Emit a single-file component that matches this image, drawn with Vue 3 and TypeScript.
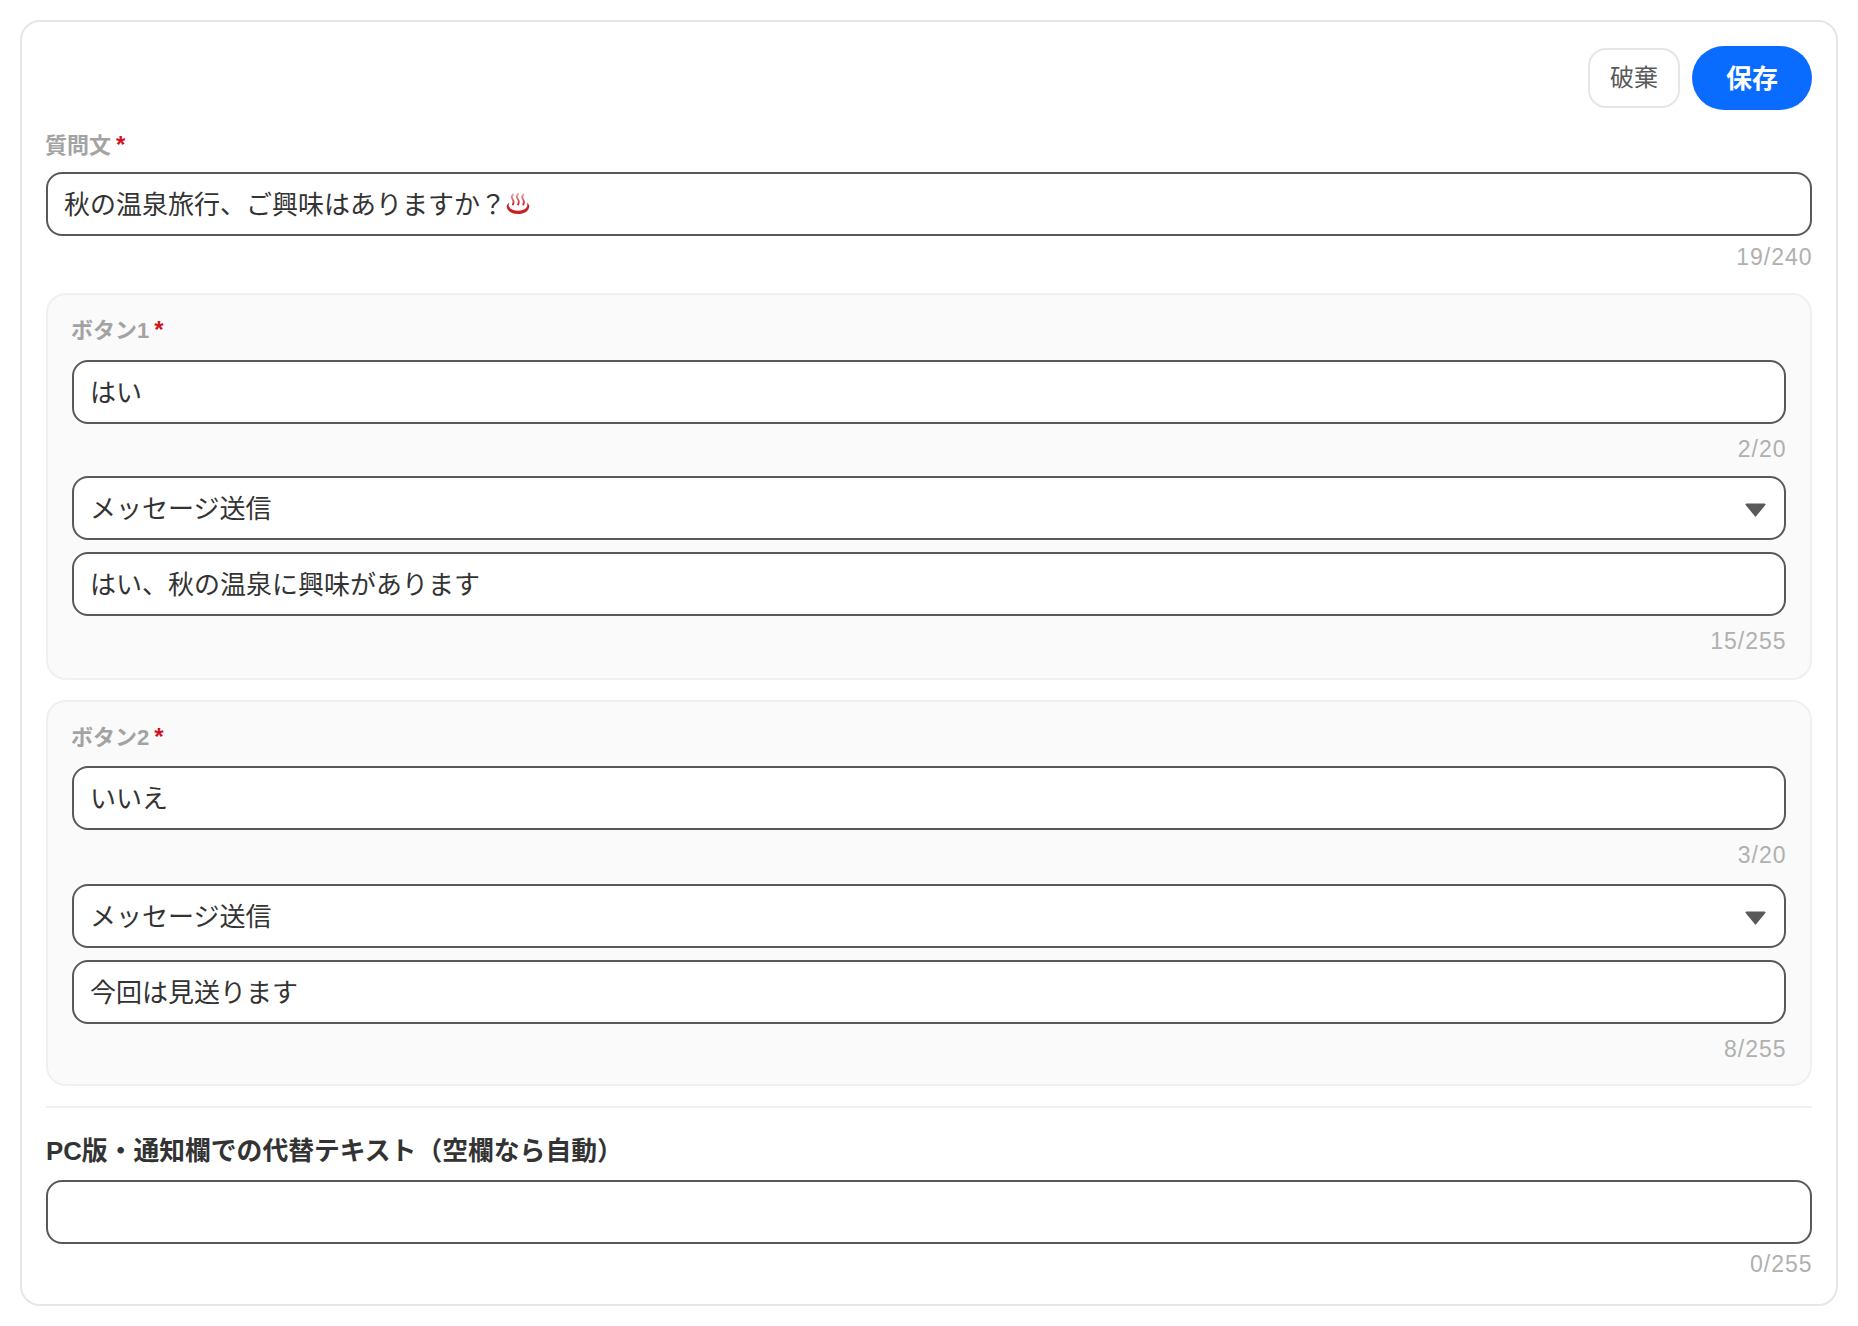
<script setup lang="ts">
interface Block {
  label: string
  text: string
  textCount: string
  action: string
  message: string
  messageCount: string
}

const blocks: Block[] = [
  { label: 'ボタン1', text: 'はい', textCount: '2/20', action: 'メッセージ送信', message: 'はい、秋の温泉に興味があります', messageCount: '15/255' },
  { label: 'ボタン2', text: 'いいえ', textCount: '3/20', action: 'メッセージ送信', message: '今回は見送ります', messageCount: '8/255' },
]
</script>

<template>
  <div class="page">
    <form class="card" @submit.prevent>
      <div class="actions">
        <button type="button" class="discard">破棄</button>
        <button type="submit" class="save">保存</button>
      </div>

      <div class="label top-label">質問文<span class="req">*</span></div>
      <div class="field">
        <span>秋の温泉旅行、ご興味はありますか？</span>
        <svg class="onsen" viewBox="0 0 24 22" width="24" height="22" aria-hidden="true">
          <defs>
            <linearGradient id="steam" x1="0" y1="0" x2="0" y2="1">
              <stop offset="0" stop-color="#e3a9a9" />
              <stop offset="1" stop-color="#cc1f24" />
            </linearGradient>
          </defs>
          <g fill="none" stroke="url(#steam)" stroke-width="1.8" stroke-linecap="round">
            <path d="M7 1.5c-2 2 -1.5 3.5 -.3 5s1.2 3 .2 5" />
            <path d="M12.2 1c-2 2 -1.5 3.7 -.3 5.2s1.2 3.2 .2 5.3" />
            <path d="M17.4 1.5c-2 2 -1.5 3.5 -.3 5s1.2 3 .2 5" />
          </g>
          <path d="M3.4 9.5C1.2 11 .6 12.600 .8 14c.6 4.400 5.600 7 11.200 7s10.600-2.600 11.200-7c.2-1.400-.4-3-2.600-4.500 1 1.600 1 3 .2 4.400-1.500 2.500-5 3.800-8.800 3.800s-7.300-1.300-8.800-3.800c-.8-1.400-.8-2.800 .2-4.400z" fill="#cc1f24" />
        </svg>
      </div>
      <div class="count count-top">19/240</div>

      <section v-for="b in blocks" :key="b.label" class="panel">
        <div class="label panel-label">{{ b.label }}<span class="req">*</span></div>
        <div class="field"><span>{{ b.text }}</span></div>
        <div class="count count-panel text-count">{{ b.textCount }}</div>
        <div class="field select">
          <span>{{ b.action }}</span>
          <svg class="caret" viewBox="0 0 21 14" width="21" height="14" aria-hidden="true">
            <path d="M1.500 .5h18a1 1 0 0 1 .8 1.600l-9 11a1 1 0 0 1-1.600 0l-9-11A1 1 0 0 1 1.500 .5z" fill="#595959" />
          </svg>
        </div>
        <div class="field message"><span>{{ b.message }}</span></div>
        <div class="count count-panel">{{ b.messageCount }}</div>
      </section>

      <hr class="rule" />

      <div class="label alt-label">PC版・通知欄での代替テキスト（空欄なら自動）</div>
      <div class="field"></div>
      <div class="count count-alt">0/255</div>
    </form>
  </div>
</template>

<style>
html, body { margin: 0; background: #fff; }
</style>

<style scoped>
.page {
  padding: 20px;
  font-family: "Liberation Sans", "Noto Sans CJK JP", sans-serif;
  color: #333;
}
.card {
  box-sizing: border-box;
  width: 1818px;
  height: 1286px;
  border: 2px solid #e6e6e6;
  border-radius: 20px;
  padding: 24px;
  background: #fff;
}
.actions {
  display: flex;
  justify-content: flex-end;
  align-items: center;
  gap: 12px;
  height: 64px;
}
button {
  font-family: inherit;
  cursor: pointer;
  padding: 0 0 4px;
}
.discard {
  box-sizing: border-box;
  width: 92px;
  height: 60px;
  padding-bottom: 6px;
  border: 2px solid #e6e6e6;
  border-radius: 18px;
  background: #fff;
  color: #595959;
  font-size: 24px;
}
.save {
  width: 120px;
  height: 64px;
  border: 0;
  border-radius: 32px;
  background: #0a6cff;
  color: #fff;
  font-size: 26px;
  font-weight: 700;
}
.label {
  font-size: 22px;
  font-weight: 700;
  line-height: 32px;
  color: #a3a3a3;
}
.req {
  color: #cf1322;
  margin-left: 5px;
  font-size: 24px;
  line-height: 0;
}
.top-label {
  margin: 20px 0 10px -1px;
}
.panel-label {
  margin: 0 0 13px -1px;
}
.alt-label {
  font-size: 25.8px;
  color: #333;
  margin: 27px 0 13px;
}
.field {
  box-sizing: border-box;
  display: flex;
  align-items: center;
  height: 64px;
  padding: 0 16px 3px;
  border: 2px solid #595959;
  border-radius: 16px;
  background: #fff;
  font-size: 26px;
  color: #333;
}
.onsen {
  margin: 2px 0 0;
  flex: none;
}
.select {
  justify-content: space-between;
}
.caret {
  margin: 6px 2px 0 0;
}
.message {
  margin-top: 12px;
}
.count {
  margin-right: -0.6px;
  text-align: right;
  font-size: 23px;
  line-height: 32px;
  letter-spacing: 1px;
  color: #b0b0b0;
}
.count-top {
  margin-top: 5px;
  margin-bottom: 20px;
}
.count-panel {
  margin-top: 9px;
}
.text-count {
  margin-bottom: 11px;
}
.count-alt {
  margin-top: 4px;
}
.panel {
  box-sizing: border-box;
  padding: 20px 24px 21px;
  margin-bottom: 20px;
  border: 2px solid #f0f0f0;
  border-radius: 20px;
  background: #fafafa;
}
.panel + .panel {
  padding-bottom: 19px;
}
.panel + .panel .panel-label {
  margin-bottom: 12px;
}
.panel + .panel .text-count {
  margin-bottom: 13px;
}
.rule {
  height: 2px;
  margin: 0;
  border: 0;
  background: #f0f0f0;
}
</style>
